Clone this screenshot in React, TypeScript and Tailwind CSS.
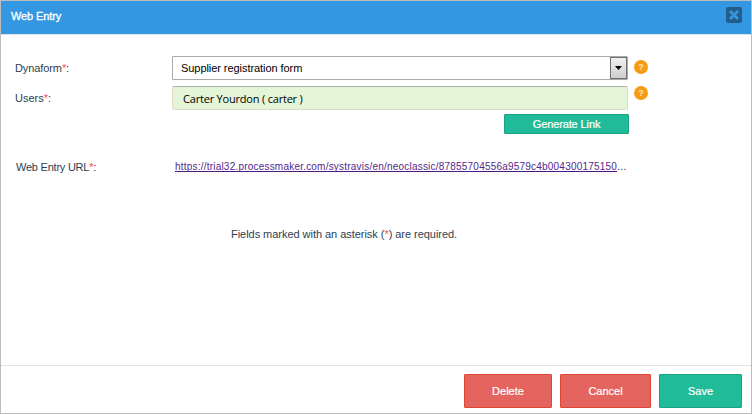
import type { ReactNode } from 'react';

function Label({ children, className = '' }: { children: ReactNode; className?: string }) {
  return (
    <label className={`shrink-0 whitespace-nowrap text-[#2d3e50] ${className}`}>
      {children}
      <span className="text-[#ff4a4a]">*</span>:
    </label>
  );
}

function HelpIcon({ className = '' }: { className?: string }) {
  return (
    <span
      className={`flex h-[14px] w-[14px] shrink-0 items-center justify-center rounded-full bg-[#f59c12] text-[9px] leading-none font-bold text-[#fde6c0] ${className}`}
    >
      ?
    </span>
  );
}

function FooterButton({ children, className }: { children: ReactNode; className: string }) {
  return (
    <button
      className={`h-[34px] rounded-[1px] border text-[11px] text-white [-webkit-text-stroke:0.2px_white] ${className}`}
    >
      {children}
    </button>
  );
}

export default function App() {
  return (
    <div className="flex h-[414px] w-[752px] flex-col overflow-hidden border border-[#bdbdbd] bg-white font-['Liberation_Sans',Arial,sans-serif] text-[11px] leading-[14px]">
      <header className="flex h-[34px] shrink-0 justify-between border-b border-[#e1e3e6] bg-[#3497e2] pr-[9px] pl-[10px]">
        <h1 className="pt-[8px] text-[11px] tracking-[-0.12px] text-white [-webkit-text-stroke:0.3px_white]">Web Entry</h1>
        <button className="mt-[6px] flex h-4 w-4 items-center justify-center rounded-[2px] bg-[#235d8b]" aria-label="Close">
          <svg width="10" height="10" viewBox="0 0 10 10" fill="none" stroke="#3497e2" strokeWidth="2.8">
            <path d="M1 1L9 9M9 1L1 9" />
          </svg>
        </button>
      </header>

      <main className="flex flex-1 flex-col pl-[14px]">
        <div className="mt-[21px] flex h-6">
          <Label className="w-[157px] pt-[5px] tracking-[-0.1px]">Dynaform</Label>
          <div className="flex h-6 w-[456px] justify-between rounded-[1px] border border-[#a9a9ad] bg-white">
            <span className="pt-[4px] pl-[8px] tracking-[-0.06px] text-black">Supplier registration form</span>
            <span className="flex h-[22px] w-[17px] items-center justify-center border border-[#707070] bg-linear-to-b from-[#f1f1f1] to-[#cecece]">
              <svg width="7" height="4" viewBox="0 0 7 4">
                <path d="M0 0H7L3.5 4Z" fill="black" />
              </svg>
            </span>
          </div>
          <HelpIcon className="mt-[4px] ml-[6px]" />
        </div>

        <div className="mt-[6px] flex h-6">
          <Label className="w-[157px] pt-[5px]">Users</Label>
          <div className="h-6 w-[456px] rounded-[2px] border border-[#dcdcc4] border-t-[#aaadaa] bg-[#e4f5d8] pt-[5px] pl-[10px] font-['Open_Sans','Noto_Sans',sans-serif] text-[11px] leading-[14px] tracking-[-0.2px] text-black">
            Carter Yourdon ( carter )
          </div>
          <HelpIcon className="ml-[6px]" />
        </div>

        <button className="mt-[4px] ml-[489px] h-5 w-[125px] shrink-0 rounded-[1px] border border-[#1ba384] bg-[#20bc99] text-[11px] leading-none tracking-[-0.12px] text-white [-webkit-text-stroke:0.2px_white]">
          Generate Link
        </button>

        <div className="mt-[26px] flex h-4">
          <Label className="w-[160px] pl-px tracking-[-0.23px]">Web Entry URL</Label>
          <div className="leading-[12px] whitespace-nowrap text-[#54278b]">
            <a className="text-[10px] tracking-[0.21px] underline decoration-[#4b187f] decoration-1 underline-offset-1 [text-decoration-skip-ink:none]">
              https://trial32.processmaker.com/systravis/en/neoclassic/87855704556a9579c4b004300175150
            </a>
            ...
          </div>
        </div>

        <p className="mt-[51px] ml-[216px] tracking-[-0.04px] text-[#2d3e50]">
          Fields marked with an asterisk (<span className="text-[#ff4a4a]">*</span>) are required.
        </p>
      </main>

      <footer className="flex h-12 shrink-0 justify-end gap-2 border-t border-[#e4e4e4] pt-[8px] pr-[9px]">
        <FooterButton className="w-[88px] border-[#df4634] bg-[#e4655f]">Delete</FooterButton>
        <FooterButton className="w-[91px] border-[#df4634] bg-[#e4655f]">Cancel</FooterButton>
        <FooterButton className="w-[83px] border-[#1ba384] bg-[#20bc99]">Save</FooterButton>
      </footer>
    </div>
  );
}
